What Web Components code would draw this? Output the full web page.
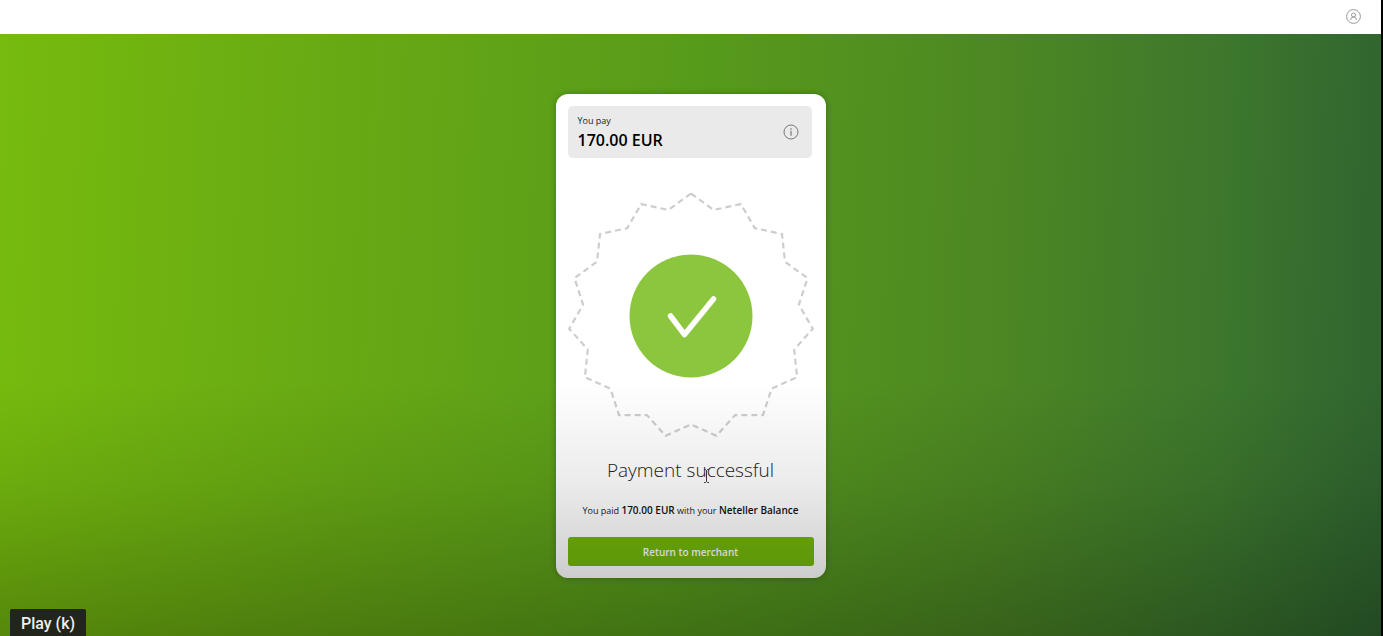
<!DOCTYPE html>
<html lang="en">
    <head>
        <meta charset="utf-8">
        <title>Payment successful</title>
        <style>
            body {
                margin: 0;
                background: #000;
            }
            b {
                font-size: 10px;
                font-weight: 600;
                color: #111;
            }
        </style>
    </head>
    <body>
        <video-frame>
            <site-header></site-header>
            <payment-card>
                <amount-box slot="amount" label="You pay">170.00 EUR</amount-box>
                <success-badge slot="badge"></success-badge>
                <span slot="title">Payment successful</span>
                <span slot="details">You paid <b>170.00 EUR</b> with your <b>Neteller Balance</b></span>
                <span slot="action">Return to merchant</span>
            </payment-card>
            <key-tooltip slot="tooltip">Play (k)</key-tooltip>
        </video-frame>
        <script>
            class VideoFrame extends HTMLElement {
                constructor() {
                    super();
                    const shadowRoot = this.attachShadow({ mode: 'open' });
                    shadowRoot.innerHTML = `
                        <style>
                            :host {
                                display: flex;
                                flex-direction: column;
                                position: relative;
                                box-sizing: border-box;
                                min-height: 100vh;
                                overflow: hidden;
                                border-right: 2px solid #000;
                                background: linear-gradient(92deg, #76bb0e 0%, #67a914 25%, #579b1b 50%, #4c8723 72%, #3c772d 88%, #31672f 98%, #30642f 100%);
                                font-family: "Open Sans", "Noto Sans", sans-serif;
                            }
                            .shade {
                                position: absolute;
                                inset: 60% 0 0 0;
                                background: linear-gradient(rgba(0, 0, 0, 0), rgba(0, 0, 0, .08) 40%, rgba(0, 0, 0, .27));
                                pointer-events: none;
                            }
                            .cursor {
                                position: absolute;
                                left: 702px;
                                top: 469px;
                            }
                        </style>
                        <slot></slot>
                        <div class="shade"></div>
                        <svg class="cursor" width="9" height="14" viewBox="0 0 9 14" fill="none" stroke="#333" aria-hidden="true">
                            <path d="M2 .5h1.500l1 1 1-1H7M4.500 1.500v11M2 13.500h1.500l1-1 1 1H7"/>
                        </svg>
                        <slot name="tooltip"></slot>
                    `;
                }
            }
            window.customElements.define('video-frame', VideoFrame);

            class SiteHeader extends HTMLElement {
                constructor() {
                    super();
                    const shadowRoot = this.attachShadow({ mode: 'open' });
                    shadowRoot.innerHTML = `
                        <style>
                            :host {
                                display: flex;
                                justify-content: flex-end;
                                align-items: center;
                                box-sizing: border-box;
                                height: 34px;
                                padding: 0 20px 2px;
                                background: #fff;
                            }
                            button {
                                display: flex;
                                padding: 0;
                                border: 0;
                                background: none;
                            }
                        </style>
                        <button type="button" aria-label="Account">
                            <svg width="15" height="15" viewBox="0 0 15 15" fill="none" stroke="#999">
                                <circle cx="7.500" cy="7.500" r="6.900"/>
                                <circle cx="7.500" cy="6" r="2"/>
                                <path d="M4.900 11V9.800q0-1.800 2.600-1.800t2.600 1.800V11"/>
                            </svg>
                        </button>
                    `;
                }
            }
            window.customElements.define('site-header', SiteHeader);

            class PaymentCard extends HTMLElement {
                constructor() {
                    super();
                    const shadowRoot = this.attachShadow({ mode: 'open' });
                    shadowRoot.innerHTML = `
                        <style>
                            :host {
                                display: flex;
                                justify-content: center;
                                padding: 60px 16px 48px;
                            }
                            main {
                                display: flex;
                                flex-direction: column;
                                box-sizing: border-box;
                                width: 270px;
                                padding: 12px;
                                border-radius: 12px;
                                background: #fff;
                                box-shadow: 0 0 6px rgba(0, 0, 0, .25);
                                text-align: center;
                            }
                            h1 {
                                margin: 16px 0 0;
                                font-size: 19px;
                                line-height: 28px;
                                font-weight: 300;
                                color: #222;
                            }
                            p {
                                margin: 18px 0;
                                font-size: 9px;
                                line-height: 16px;
                                color: #222;
                                white-space: nowrap;
                            }
                            button {
                                height: 29px;
                                padding: 0;
                                border: 0;
                                border-radius: 3px;
                                background: #74b80a;
                                color: #fff;
                                font: 600 10px/16px "Open Sans", "Noto Sans", sans-serif;
                            }
                        </style>
                        <main>
                            <slot name="amount"></slot>
                            <slot name="badge"></slot>
                            <h1><slot name="title"></slot></h1>
                            <p><slot name="details"></slot></p>
                            <button type="button"><slot name="action"></slot></button>
                        </main>
                    `;
                }
            }
            window.customElements.define('payment-card', PaymentCard);

            class AmountBox extends HTMLElement {
                constructor() {
                    super();
                    const shadowRoot = this.attachShadow({ mode: 'open' });
                    shadowRoot.innerHTML = `
                        <style>
                            :host {
                                display: flex;
                                justify-content: space-between;
                                align-items: center;
                                margin-right: 2px;
                                padding: 6px 13px 6px 10px;
                                border-radius: 5px;
                                background: #eaeaea;
                                text-align: left;
                            }
                            .text {
                                padding-bottom: 2px;
                            }
                            .label {
                                font-size: 9px;
                                line-height: 18px;
                                color: #222;
                            }
                            .value {
                                font-size: 16px;
                                line-height: 20px;
                                font-weight: 600;
                                color: #000;
                            }
                            button {
                                display: flex;
                                padding: 0;
                                border: 0;
                                background: none;
                            }
                        </style>
                        <div class="text">
                            <div class="label">${this.getAttribute('label')}</div>
                            <div class="value"><slot></slot></div>
                        </div>
                        <button type="button" aria-label="Details">
                            <svg width="16" height="16" viewBox="0 0 16 16" fill="none" stroke="#777">
                                <circle cx="8" cy="8" r="7"/>
                                <path d="M8 6.800v5M8 4.300v1.400" stroke-width="1.200"/>
                            </svg>
                        </button>
                    `;
                }
            }
            window.customElements.define('amount-box', AmountBox);

            class SuccessBadge extends HTMLElement {
                constructor() {
                    super();
                    const shadowRoot = this.attachShadow({ mode: 'open' });
                    // 15-pointed outline around the tick
                    const points = [];
                    for (let i = 0; i < 30; i++) {
                        const radius = i % 2 ? 108.5 : 122.5;
                        const angle = i * Math.PI / 15;
                        points.push(`${(radius * Math.sin(angle)).toFixed(1)},${(-radius * Math.cos(angle)).toFixed(1)}`);
                    }
                    shadowRoot.innerHTML = `
                        <style>
                            :host {
                                display: block;
                                margin: 34px 0 0;
                            }
                            svg {
                                display: block;
                                width: 100%;
                                overflow: visible;
                            }
                        </style>
                        <svg viewBox="-123 -124 246 248" fill="none" role="img" aria-label="Success">
                            <polygon points="${points.join(' ')}" stroke="#cdcdcd" stroke-width="2.200" stroke-dasharray="6 4"/>
                            <circle r="61.500" fill="#8cc63e"/>
                            <path d="M-20.500 0l14 18.500L22.500-17" stroke="#fff" stroke-width="5.500" stroke-linecap="round" stroke-linejoin="round"/>
                        </svg>
                    `;
                }
            }
            window.customElements.define('success-badge', SuccessBadge);

            class KeyTooltip extends HTMLElement {
                constructor() {
                    super();
                    const shadowRoot = this.attachShadow({ mode: 'open' });
                    shadowRoot.innerHTML = `
                        <style>
                            :host {
                                position: absolute;
                                left: 10px;
                                bottom: 0;
                                padding: 5px 11px 2px;
                                border-radius: 2px 2px 0 0;
                                background: #22261a;
                                color: #eee;
                                font: 500 16px/20px Roboto, sans-serif;
                            }
                        </style>
                        <slot></slot>
                    `;
                }
            }
            window.customElements.define('key-tooltip', KeyTooltip);
        </script>
    </body>
</html>
